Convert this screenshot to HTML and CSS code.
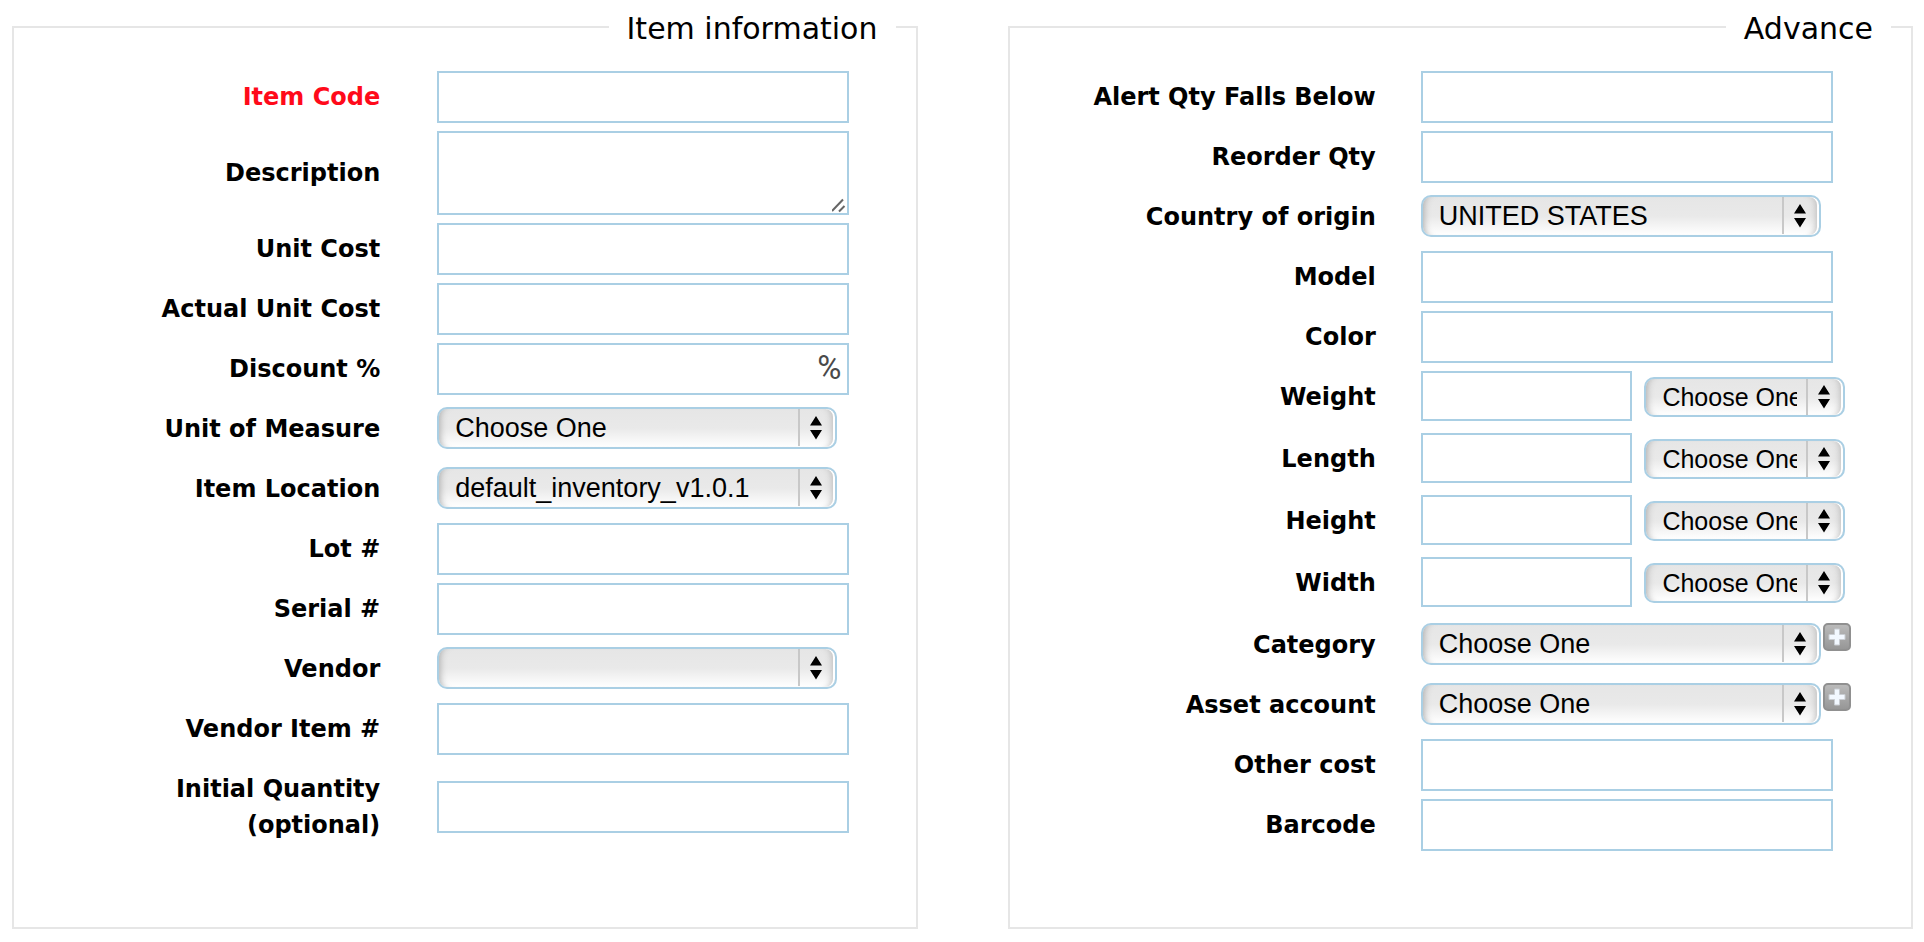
FILE: index.html
```html
<!DOCTYPE html>
<html lang="en">
<head>
<meta charset="utf-8">
<title>Item</title>
<link rel="stylesheet" href="styles.css">
</head>
<body>
<form class="item-form">
  <fieldset class="panel">
    <legend class="panel-title">Item information</legend>
    <div class="rows rows-info">
      <div class="row"><label class="label required" for="code">Item Code</label><input class="box" id="code" type="text"></div>
      <div class="row"><label class="label" for="desc">Description</label><textarea class="box area" id="desc"></textarea></div>
      <div class="row"><label class="label" for="ucost">Unit Cost</label><input class="box" id="ucost" type="text"></div>
      <div class="row"><label class="label" for="acost">Actual Unit Cost</label><input class="box" id="acost" type="text"></div>
      <div class="row"><label class="label" for="disc">Discount %</label><div class="percent"><input class="box" id="disc" type="text"><span class="percent-sign">%</span></div></div>
      <div class="row"><label class="label" for="uom">Unit of Measure</label><select class="pick" id="uom"><option>Choose One</option></select></div>
      <div class="row"><label class="label" for="loc">Item Location</label><select class="pick" id="loc"><option>default_inventory_v1.0.1</option></select></div>
      <div class="row"><label class="label" for="lot">Lot #</label><input class="box" id="lot" type="text"></div>
      <div class="row"><label class="label" for="serial">Serial #</label><input class="box" id="serial" type="text"></div>
      <div class="row"><label class="label" for="vendor">Vendor</label><select class="pick" id="vendor"><option></option></select></div>
      <div class="row"><label class="label" for="vitem">Vendor Item #</label><input class="box" id="vitem" type="text"></div>
      <div class="row"><label class="label" for="qty">Initial Quantity<br>(optional)</label><input class="box" id="qty" type="text"></div>
    </div>
  </fieldset>

  <fieldset class="panel">
    <legend class="panel-title">Advance</legend>
    <div class="rows rows-advance">
      <div class="row"><label class="label" for="alert">Alert Qty Falls Below</label><input class="box" id="alert" type="text"></div>
      <div class="row"><label class="label" for="reorder">Reorder Qty</label><input class="box" id="reorder" type="text"></div>
      <div class="row"><label class="label" for="country">Country of origin</label><select class="pick" id="country"><option>UNITED STATES</option></select></div>
      <div class="row"><label class="label" for="model">Model</label><input class="box" id="model" type="text"></div>
      <div class="row"><label class="label" for="color">Color</label><input class="box" id="color" type="text"></div>
      <div class="row row-measure"><label class="label" for="weight">Weight</label><div class="measure"><input class="box box-short" id="weight" type="text"><select class="pick pick-unit" aria-label="Weight unit"><option>Choose One</option></select></div></div>
      <div class="row row-measure"><label class="label" for="length">Length</label><div class="measure"><input class="box box-short" id="length" type="text"><select class="pick pick-unit" aria-label="Length unit"><option>Choose One</option></select></div></div>
      <div class="row row-measure"><label class="label" for="height">Height</label><div class="measure"><input class="box box-short" id="height" type="text"><select class="pick pick-unit" aria-label="Height unit"><option>Choose One</option></select></div></div>
      <div class="row row-measure"><label class="label" for="width">Width</label><div class="measure"><input class="box box-short" id="width" type="text"><select class="pick pick-unit" aria-label="Width unit"><option>Choose One</option></select></div></div>
      <div class="row"><label class="label" for="cat">Category</label><div class="with-add"><select class="pick" id="cat"><option>Choose One</option></select><button class="add" type="button" aria-label="Add category"><svg class="plus" viewBox="0 0 28 28" aria-hidden="true"><path d="M11.500 6h5v5.500H22v5h-5.500V22h-5v-5.500H6v-5h5.500z"/></svg></button></div></div>
      <div class="row"><label class="label" for="asset">Asset account</label><div class="with-add"><select class="pick" id="asset"><option>Choose One</option></select><button class="add" type="button" aria-label="Add asset account"><svg class="plus" viewBox="0 0 28 28" aria-hidden="true"><path d="M11.500 6h5v5.500H22v5h-5.500V22h-5v-5.500H6v-5h5.500z"/></svg></button></div></div>
      <div class="row"><label class="label" for="other">Other cost</label><input class="box" id="other" type="text"></div>
      <div class="row"><label class="label" for="barcode">Barcode</label><input class="box" id="barcode" type="text"></div>
    </div>
  </fieldset>
</form>
</body>
</html>
```
FILE: styles.css
```css
* {
  box-sizing: border-box;
}

body {
  margin: 0;
  background: #fff;
  color: #000;
  font-family: Verdana, "DejaVu Sans", sans-serif;
}

.item-form {
  display: grid;
  grid-template-columns: repeat(2, minmax(0, 1fr));
  column-gap: 90px;
  padding: 7px 11px 12px 12px;
}

.panel {
  min-width: 0;
  margin: 0;
  padding: 24px 0 76px;
  border: 2px solid #e6e6e6;
}

.panel-title {
  margin: 0 20px 0 auto;
  padding: 4px 18px 0;
  font-size: 30px;
  line-height: 36px;
}

.rows {
  display: flex;
  flex-direction: column;
  gap: 8px;
}

.rows-info {
  padding-right: 66px;
}

.rows-advance {
  padding-right: 78px;
}

.row {
  display: grid;
  grid-template-columns: minmax(0, 366fr) minmax(0, 412fr);
  align-items: center;
}

.rows-info .row {
  column-gap: 57px;
}

.rows-advance .row {
  column-gap: 45px;
}

.label {
  padding: 8px 0;
  font-size: 24px;
  font-weight: bold;
  line-height: 36px;
  text-align: right;
}

.required {
  color: #ff0a1a;
}

.box {
  display: block;
  width: 100%;
  height: 52px;
  margin: 0;
  padding: 4px 8px;
  border: 2px solid #aacfe4;
  border-radius: 0;
  background: #fff;
  font: 27px "Liberation Sans", Arial, sans-serif;
}

.area {
  height: 84px;
  resize: vertical;
}

.area::-webkit-resizer {
  background: url("data:image/svg+xml,%3Csvg xmlns='http://www.w3.org/2000/svg' width='15' height='15'%3E%3Cpath d='M0 13L11 1.500M7 13.500L12.500 8' stroke='%23666' stroke-width='2' fill='none'/%3E%3C/svg%3E") no-repeat right bottom;
}

.percent {
  position: relative;
}

.percent-sign {
  position: absolute;
  top: 0;
  right: 8px;
  color: #4a4a4a;
  font-family: Roboto, sans-serif;
  font-size: 33px;
  line-height: 50px;
}

.pick {
  appearance: none;
  width: calc(100% - 12px);
  height: 42px;
  margin: 0 0 2px;
  padding: 0 44px 0 16px;
  border: 2px solid #aacfe4;
  border-radius: 10px;
  background:
    url("data:image/svg+xml,%3Csvg xmlns='http://www.w3.org/2000/svg' width='37' height='38'%3E%3Cpath d='M1 0v37' stroke='%23c8c8c8' stroke-width='2'/%3E%3Cpath d='M12 16.500L18 7l6 9.500zM12 21h12l-6 9.500z'/%3E%3C/svg%3E") no-repeat right center,
    linear-gradient(#e6e6e6, #e9e9e9 50%, #fff);
  box-shadow: inset -2px 0 #fff, inset 8px 0 7px -7px #aaa, inset -10px 0 7px -7px #bbb;
  color: #000;
  font: 27px "Liberation Sans", Arial, sans-serif;
}

.row-measure {
  align-items: start;
  padding-bottom: 2px;
}

.measure {
  display: grid;
  grid-template-columns: minmax(0, 211fr) minmax(0, 200fr);
  column-gap: 12px;
  align-items: center;
  margin-right: -12px;
}

.box-short {
  height: 50px;
}

.pick-unit {
  width: 100%;
  height: 40px;
  margin: 2px 0 0;
  padding-right: 46px;
  font-size: 25px;
}

.with-add {
  display: flex;
  align-items: flex-start;
  gap: 2px;
  margin-right: -18px;
}

.with-add .pick {
  flex: 1;
  min-width: 0;
}

.add {
  flex: none;
  width: 28px;
  height: 28px;
  padding: 0;
  border: 2px solid #909090;
  border-radius: 5px;
  background: linear-gradient(#bababa, #979797);
}

.plus {
  display: block;
  width: 28px;
  height: 28px;
  margin: -2px;
  fill: #f2f8ff;
  stroke: #c9cdd2;
  stroke-width: 1;
}
```
